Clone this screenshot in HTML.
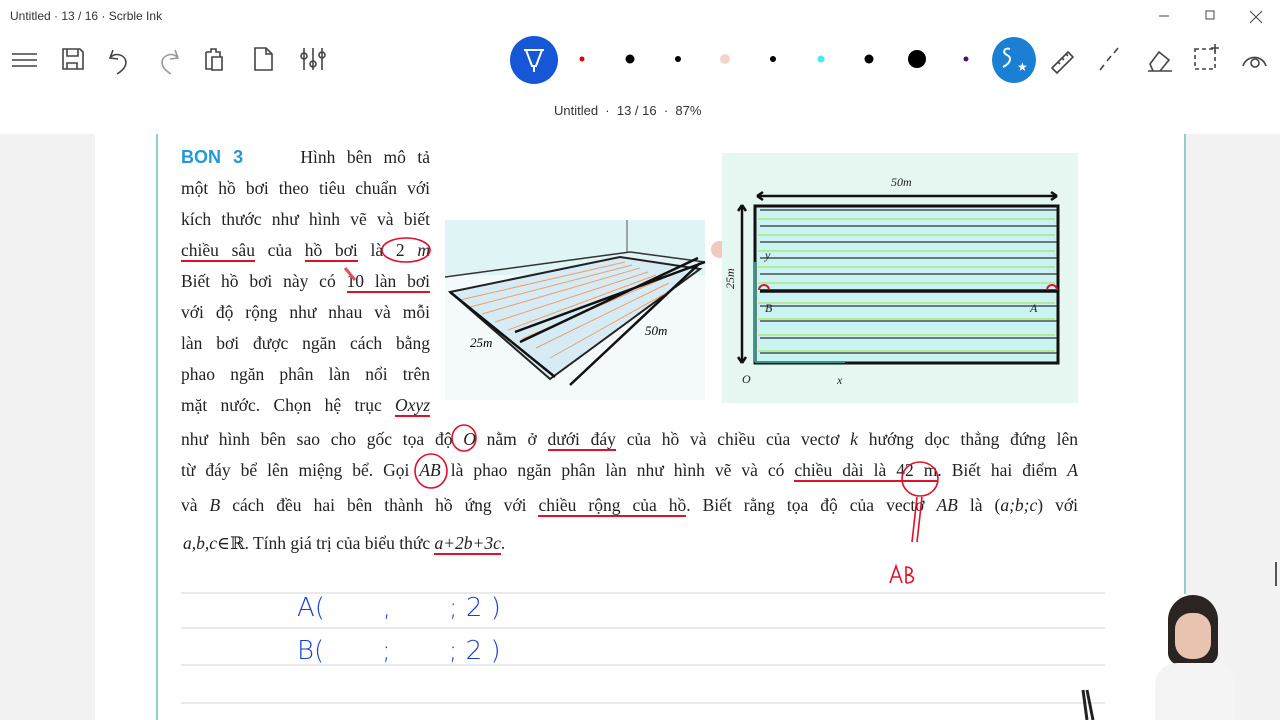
<!DOCTYPE html>
<html><head><meta charset="utf-8"><style>
body{margin:0;width:1280px;height:720px;overflow:hidden;background:#fff;font-family:"Liberation Sans",sans-serif;position:relative}
.abs{position:absolute}
.tb{color:#333;font-size:12px}
.ser{font-family:"Liberation Serif","DejaVu Serif",serif;font-size:17.5px;color:#222;white-space:nowrap}
.jl{position:absolute;left:181px;width:249px;text-align:justify;text-align-last:justify}
.fl{position:absolute;left:181px;width:897px;text-align:justify;text-align-last:justify}
.u{border-bottom:2px solid #e0102a}
.hw{font-family:"DejaVu Sans",sans-serif;color:#1a3fd0;font-size:26px;position:absolute;font-weight:300}
</style></head><body>
<div class="abs tb" style="left:10px;top:9px">Untitled · 13 / 16 · Scrble Ink</div>
<svg class="abs" style="left:0;top:0" width="1280" height="134">
<g stroke="#444" stroke-width="1.6" fill="none">
<path d="M1159 16h10M1206 11h8v8h-8zM1250 11l12 12M1262 11l-12 12" stroke-width="1"/>
<path d="M12 54h25M12 60h25M12 66h25"/>
<path d="M63 49h17l3 3v17H63zM67 49v7h11v-7M67 69v-6h10v6"/>
<path d="M113 50l-3 8 8 1M110 58c4-6 15-4 16 4 0 5-4 9-9 12"/>
<path d="M175 50l3 8-8 1M178 58c-4-6-15-4-16 4 0 5 4 9 9 12" stroke="#999"/>
<path d="M206 52h5v-3h5v3h4v5M206 52v17h6M212 57h10v13h-10z"/>
<path d="M255 48h11l6 6v16h-17zM266 48v6h6"/>
<path d="M304 48v22M313 48v22M322 48v22"/><circle cx="304" cy="56" r="3"/><circle cx="313" cy="64" r="3"/><circle cx="322" cy="55" r="3"/>
<path d="M1052 68l16-16 5 5-16 16zM1058 62l2 2M1062 58l2 2M1066 54l2 2"/>
<path d="M1100 70l4-5M1107 61l4-5M1114 53l4-5"/>
<path d="M1150 64l9-12 10 8-9 11h-7zM1148 71h24"/>
<path d="M1195 49h20v20h-20z" stroke-dasharray="4 3"/><path d="M1215 44v8M1211 48h8"/>
<path d="M1243 66a12 12 0 0 1 23 0"/><circle cx="1255" cy="63" r="4"/>
</g>
<circle cx="534" cy="60" r="24" fill="#1557d6"/>
<path d="M524 50h20M526 50l6 16h4l6-16M534 66v6" stroke="#fff" stroke-width="2" fill="none"/>
<circle cx="582" cy="59" r="2.5" fill="#d00"/>
<circle cx="630" cy="59" r="4.5" fill="#000"/>
<circle cx="678" cy="59" r="3" fill="#000"/>
<ellipse cx="725" cy="59" rx="5" ry="5" fill="#efd5cc"/>
<circle cx="773" cy="59" r="3" fill="#000"/>
<circle cx="821" cy="59" r="3.5" fill="#4ee"/>
<circle cx="869" cy="59" r="4.5" fill="#000"/>
<circle cx="917" cy="59" r="9" fill="#000"/>
<circle cx="966" cy="59" r="2.5" fill="#4a1080"/>
<ellipse cx="1014" cy="60" rx="22" ry="23" fill="#1b7fd4"/>
<path d="M1010 49c-6-2-8 4-3 6s4 8-4 12" stroke="#fff" stroke-width="2" fill="none"/>
<text x="1017" y="71" fill="#fff" font-size="12">★</text>
</svg>
<div class="abs tb" style="left:554px;top:103px;font-size:13px">Untitled &nbsp;·&nbsp; 13 / 16 &nbsp;·&nbsp; 87%</div>
<div class="abs" style="left:0;top:134px;width:95px;height:586px;background:#f2f2f2"></div>
<div class="abs" style="left:1186px;top:134px;width:94px;height:586px;background:#f2f2f2"></div>
<div class="abs" style="left:156px;top:134px;width:2px;height:586px;background:#8fcfc8"></div>
<div class="abs" style="left:1184px;top:134px;width:2px;height:460px;background:#8fcfc8"></div>
<div class="abs" style="left:1275px;top:562px;width:2px;height:24px;background:#555"></div>

<div class="ser">
<div class="jl" style="top:147px"><b style="color:#1f9ad6;font-family:'Liberation Sans';font-size:18px">BON&nbsp;3</b>&nbsp;&nbsp;&nbsp;&nbsp; Hình bên mô tả</div>
<div class="jl" style="top:178px">một hồ bơi theo tiêu chuẩn với</div>
<div class="jl" style="top:209px">kích thước như hình vẽ và biết</div>
<div class="jl" style="top:240px"><span class="u">chiều sâu</span> của <span class="u">hồ bơi</span> là 2 <i>m</i></div>
<div class="jl" style="top:271px">Biết hồ bơi này có <span class="u">10 làn bơi</span></div>
<div class="jl" style="top:302px">với độ rộng như nhau và mỗi</div>
<div class="jl" style="top:333px">làn bơi được ngăn cách bằng</div>
<div class="jl" style="top:364px">phao ngăn phân làn nổi trên</div>
<div class="jl" style="top:395px">mặt nước. Chọn hệ trục <i class="u">Oxyz</i></div>
<div class="fl" style="top:429px">như hình bên sao cho gốc tọa độ <i>O</i> nằm ở <span class="u">dưới đáy</span> của hồ và chiều của vectơ <i>k</i> hướng dọc thẳng đứng lên</div>
<div class="fl" style="top:460px">từ đáy bể lên miệng bể. Gọi <i>AB</i> là phao ngăn phân làn như hình vẽ và có <span class="u">chiều dài là 42 m</span>. Biết hai điểm <i>A</i></div>
<div class="fl" style="top:495px">và <i>B</i> cách đều hai bên thành hồ ứng với <span class="u">chiều rộng của hồ</span>. Biết rằng tọa độ của vectơ <i>AB</i> là (<i>a;b;c</i>) với</div>
<div class="abs" style="left:183px;top:533px"><i>a,b,c</i>∈ℝ. Tính giá trị của biểu thức <i class="u">a+2b+3c</i>.</div>
</div>

<svg class="abs" style="left:440px;top:215px" width="270" height="190">
<rect x="5" y="5" width="260" height="55" fill="#dff4f4"/>
<rect x="5" y="60" width="260" height="125" fill="#f4fafb"/>
<path d="M187 5v32" stroke="#555"/>
<path d="M5 62l185-25 75 10" stroke="#333" fill="none" stroke-width="1.5"/>
<path d="M10 77l170-35 80 12-150 110z" fill="#d7ebf4" stroke="#222" stroke-width="2"/>
<g stroke="#e9a070" stroke-width="1"><path d="M20 85l165-38M30 92l162-42M42 99l158-46M55 107l153-50M68 115l148-55M82 124l140-60M96 133l133-65M110 143l125-70"/></g>
<path d="M10 77l105 85M80 127l178-84M130 170l130-122M75 117l190-70" stroke="#111" stroke-width="2.5" fill="none"/>
<text x="30" y="132" font-family="Liberation Serif" font-style="italic" font-size="13">25m</text>
<text x="205" y="120" font-family="Liberation Serif" font-style="italic" font-size="13">50m</text>
</svg>
<div class="abs" style="left:711px;top:241px;width:17px;height:17px;border-radius:50%;background:#f2c8c0"></div>

<svg class="abs" style="left:722px;top:153px" width="356" height="250">
<rect width="356" height="250" fill="#e6f7f1"/>
<rect x="33" y="53" width="303" height="157" fill="#c9f3f0"/>
<g stroke="#b6e8a0" stroke-width="2">
<path d="M36 66h297M36 82h297M36 98h297M36 114h297M36 130h297M36 150h297M36 166h297M36 182h297M36 198h297"/></g>
<g stroke="#333" stroke-width="1.3"><path d="M46 72h297M46 88h297M46 104h297M46 120h297M46 136h297M46 168h297M46 183h297M46 200h297M46 215h297" transform="translate(-8,-15)"/></g>
<rect x="33" y="53" width="303" height="157" fill="none" stroke="#111" stroke-width="3"/>
<path d="M46 151h298" stroke="#111" stroke-width="3.5" transform="translate(-8,-13)"/>
<path d="M35 43h300M20 52v158M35 43l6-4M35 43l6 4M335 43l-6-4M335 43l-6 4M20 52l-4 6M20 52l4 6M20 210l-4-6M20 210l4-6" stroke="#111" stroke-width="2.5" fill="none"/>
<path d="M33 209h90M33 209v-100" stroke="#2a9a90" stroke-width="2"/>
<path d="M37 137a5 5 0 0 1 10 0M325 137a5 5 0 0 1 10 0" stroke="#e0102a" stroke-width="2" fill="none"/>
<g font-family="Liberation Serif" font-style="italic" font-size="12" fill="#222">
<text x="169" y="33">50m</text><text x="43" y="106">y</text><text x="43" y="159">B</text><text x="308" y="159">A</text><text x="20" y="230">O</text><text x="115" y="231">x</text>
<text transform="translate(12,136) rotate(-90)">25m</text></g>
</svg>

<svg class="abs" style="left:0;top:0" width="1280" height="720" fill="none">
<g stroke="#e0102a" stroke-width="1.6">
<ellipse cx="406" cy="250" rx="24" ry="12"/>
<ellipse cx="464" cy="438" rx="12" ry="13"/>
<ellipse cx="431" cy="471" rx="16" ry="17"/>
<ellipse cx="920" cy="479" rx="18" ry="17"/>
<path d="M917 497l-5 45M922 497l-5 45"/>
<path d="M890 583l6-17 6 17M892 577h8M906 583v-16c8 0 8 8 0 8 10 0 10 8 0 8"/>
</g>
<g stroke="#d4d4d4"><path d="M181 593h924M181 628h924M181 665h924M181 703h924"/></g>
<path d="M345 268l10 12" stroke="#e05060" stroke-width="3"/>
<path d="M1083 690l4 30M1087 690l6 30" stroke="#222" stroke-width="3"/>
</svg>
<div class="hw" style="left:297px;top:593px">A(&nbsp;&nbsp;&nbsp;&nbsp;&nbsp;&nbsp;&nbsp;, &nbsp;&nbsp;&nbsp;&nbsp;&nbsp; ; 2 )</div>
<div class="hw" style="left:297px;top:636px">B(&nbsp;&nbsp;&nbsp;&nbsp;&nbsp;&nbsp;&nbsp;; &nbsp;&nbsp;&nbsp;&nbsp;&nbsp; ; 2 )</div>

<div class="abs" style="left:1150px;top:595px;width:90px;height:125px;overflow:hidden">
<div class="abs" style="left:18px;top:0;width:50px;height:70px;border-radius:25px 25px 12px 12px;background:#2a2422"></div>
<div class="abs" style="left:25px;top:18px;width:36px;height:46px;border-radius:16px;background:#e8c4b0"></div>
<div class="abs" style="left:5px;top:68px;width:80px;height:70px;border-radius:22px 22px 0 0;background:#f4f4f4"></div>
</div>
</body></html>
